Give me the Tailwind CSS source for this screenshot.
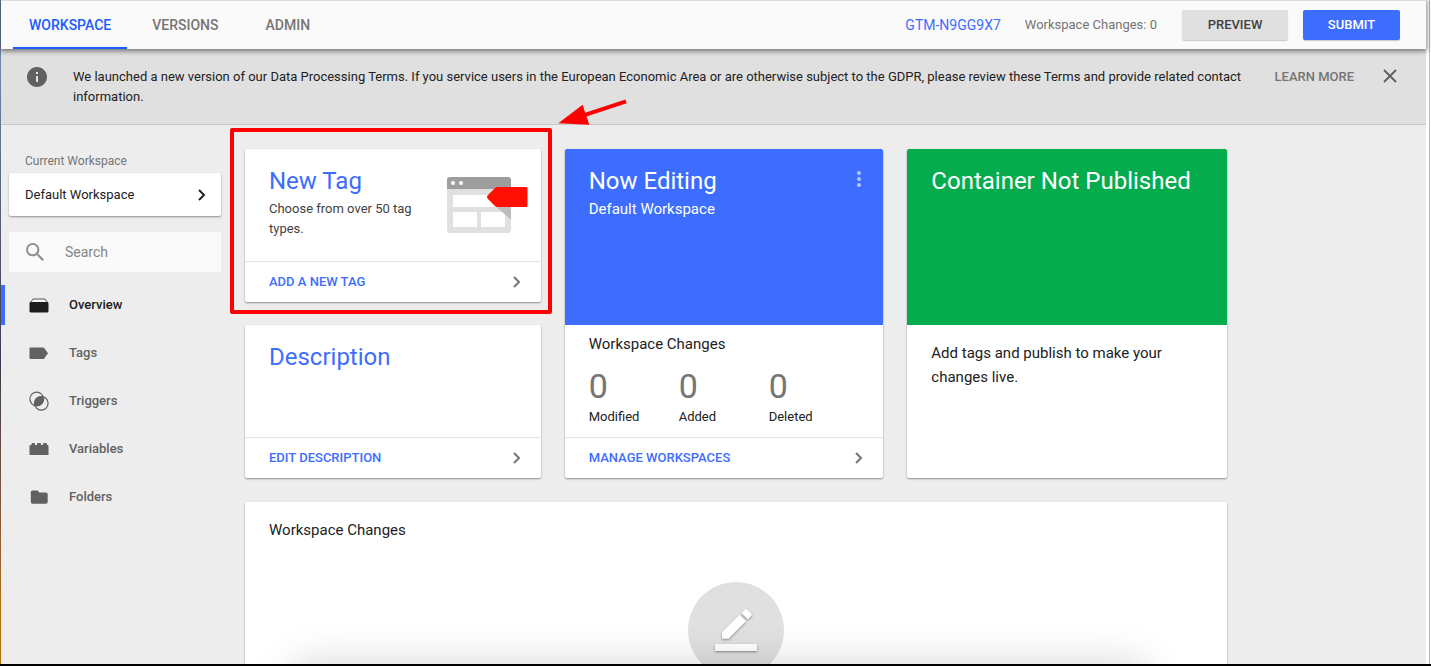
<!DOCTYPE html>
<html lang="en">

<head>
    <meta charset="UTF-8">
    <meta name="viewport" content="width=device-width,initial-scale=1.0">
    <title>Tag Manager - Workspace</title>
    <script src="https://cdn.jsdelivr.net/npm/@tailwindcss/browser@4"></script>
</head>

<body class="font-[Roboto,sans-serif] text-[13px] leading-5 text-[#212121]">
    <div class="relative h-screen overflow-hidden flex border-b-2 border-black bg-white">
        <!-- desktop showing behind the window -->
        <div class="w-px shrink-0 bg-linear-to-b from-[#6f87a8] from-10% via-[#3c3a4c] via-55% to-[#b06a10] to-90%"></div>

        <div class="relative flex-1 min-w-0 flex flex-col bg-[#ededed]">
            <header class="relative z-10 flex h-[49px] shrink-0 items-center justify-between border-t border-[#dcdcdc] bg-[#fafafa] pl-3 pr-[26px] shadow-[0_1px_5px_1px_rgba(0,0,0,0.5)]">
                <nav class="flex h-full gap-[9px] text-sm font-medium text-[#757575]">
                    <a href="#" class="flex items-center border-b-2 border-[#1a5cff] px-4 pt-[2px] text-[#1a5cff]">WORKSPACE</a>
                    <a href="#" class="flex items-center border-b-2 border-transparent px-4 pt-[2px]">VERSIONS</a>
                    <a href="#" class="flex items-center border-b-2 border-transparent px-[22px] pt-[2px]">ADMIN</a>
                </nav>
                <div class="flex items-center">
                    <a href="#" class="mr-6 text-sm text-[#3d6dff]">GTM-N9GG9X7</a>
                    <span class="mr-[25px] text-[#757575]">Workspace Changes: 0</span>
                    <button class="mr-[15px] h-[30px] w-[106px] rounded-xs bg-[#e0e0e0] font-medium text-[#424242] shadow-[0_1px_1px_rgba(0,0,0,0.2)]">PREVIEW</button>
                    <button class="h-[30px] w-[97px] rounded-xs bg-[#3d6dff] font-medium text-white shadow-[0_1px_1px_rgba(0,0,0,0.2)]">SUBMIT</button>
                </div>
            </header>

            <div class="flex shrink-0 items-start border-b border-[#c8c8c8] bg-[#e0e0e0] pt-[18px] pr-7 pb-[17px] pl-[26px]">
                <svg class="size-5 shrink-0" viewBox="2 2 20 20" fill="#616161"><path d="M12 2C6.500 2 2 6.500 2 12s4.500 10 10 10 10-4.500 10-10S17.500 2 12 2zm1 15h-2v-6h2v6zm0-8h-2V7h2v2z" /></svg>
                <p class="ml-[26px] flex-1">We launched a new version of our Data Processing Terms. If you service users in the European Economic Area or are otherwise subject to the GDPR, please review these Terms and provide related contact information.</p>
                <a href="#" class="ml-6 font-medium text-[#757575]">LEARN MORE</a>
                <button class="ml-7 flex h-5 items-center" aria-label="Dismiss">
                    <svg class="size-4" viewBox="0 0 16 16" fill="none" stroke="#616161" stroke-width="2"><path d="M2 1l12 12M14 1L2 13" /></svg>
                </button>
            </div>

            <div class="flex min-h-0 flex-1">
                <aside class="w-[220px] shrink-0 pt-[26px]">
                    <div class="pl-2">
                        <div class="pl-4 text-xs leading-5 text-[#757575]">Current Workspace</div>
                        <button class="mt-[2px] flex h-[43px] w-full items-center justify-between rounded-xs bg-white pl-4 pr-[14px] shadow-[0_1px_2px_rgba(0,0,0,0.4)]">
                            Default Workspace
                            <svg class="size-3" viewBox="0 0 12 12" fill="none" stroke="#212121" stroke-width="2"><path d="M4 1l5 5-5 5" /></svg>
                        </button>
                        <label class="mt-4 flex h-10 items-center bg-[#fafafa] pl-[17px]">
                            <svg class="size-[18px] shrink-0" viewBox="3 3 17.500 17.500" fill="#8e8e8e"><path d="M15.500 14h-.79l-.28-.27A6.470 6.470 0 0 0 16 9.500 6.500 6.500 0 1 0 9.500 16c1.610 0 3.090-.59 4.230-1.570l.27.28v.79l5 4.990L20.490 19l-4.990-5zm-6 0C7.010 14 5 11.990 5 9.500S7.010 5 9.500 5 14 7.010 14 9.500 11.990 14 9.500 14z" /></svg>
                            <input type="text" aria-label="Search" placeholder="Search" class="ml-[21px] w-36 bg-transparent text-sm outline-none placeholder:text-[#858585]">
                        </label>
                    </div>
                    <nav class="mt-[13px] flex flex-col gap-2 font-medium text-[#616161]">
                        <a href="#" class="flex h-10 items-center border-l-4 border-[#3d6dff] pl-6 text-[#212121]">
                            <svg class="w-5 h-4" viewBox="0 0 20 16"><path d="M1 6l3-4h12l3 4" fill="#f5f5f5" stroke="#555" /><path d="M.5 6.500a1.500 1.500 0 0 1 1.500-1.500h16a1.500 1.500 0 0 1 1.500 1.500V14a1.500 1.500 0 0 1-1.500 1.500H2A1.500 1.500 0 0 1 .5 14z" fill="#1c1c1c" /></svg>
                            <span class="ml-5">Overview</span>
                        </a>
                        <a href="#" class="flex h-10 items-center border-l-4 border-transparent pl-6">
                            <svg class="w-5 h-4" viewBox="0 0 20 16" fill="#616161"><path d="M1.500 2.500h12.500a1.500 1.500 0 0 1 1.200.6L19 8.250l-3.800 5.150a1.500 1.500 0 0 1-1.200.6H1.500a1 1 0 0 1-1-1v-9.500a1 1 0 0 1 1-1z" /></svg>
                            <span class="ml-5">Tags</span>
                        </a>
                        <a href="#" class="flex h-10 items-center border-l-4 border-transparent pl-6">
                            <svg class="size-5" viewBox="0 0 20 20" fill="none" stroke="#616161" stroke-width="1.200"><circle cx="7.700" cy="8" r="6.800" /><circle cx="12.300" cy="12.300" r="6.800" /><path d="M14.400 6.300A6.800 6.800 0 0 0 5.700 14.200 6.800 6.800 0 0 0 14.400 6.300z" fill="#616161" /></svg>
                            <span class="ml-5">Triggers</span>
                        </a>
                        <a href="#" class="flex h-10 items-center border-l-4 border-transparent pl-6">
                            <svg class="w-5 h-4" viewBox="0 0 20 16" fill="#616161"><path d="M.5 14V5q0-1 1-1h1V3q0-1 1-1h1.500q1 0 1 1v1h2V3q0-1 1-1h2q1 0 1 1v1h2V3q0-1 1-1H17q1 0 1 1v1h.5q1 0 1 1v9z" /></svg>
                            <span class="ml-5">Variables</span>
                        </a>
                        <a href="#" class="flex h-10 items-center border-l-4 border-transparent pl-6">
                            <svg class="w-5 h-4" viewBox="0 0 20 16" fill="#616161"><path d="M3.500 1.500h5l2 2h6.500a1.700 1.700 0 0 1 1.700 1.700V13a1.700 1.700 0 0 1-1.700 1.700H3.500A1.700 1.700 0 0 1 1.800 13V3.200a1.700 1.700 0 0 1 1.700-1.700z" /></svg>
                            <span class="ml-5">Folders</span>
                        </a>
                    </nav>
                </aside>

                <main class="min-w-0 flex-1 pt-6 pl-6">
                    <div class="flex max-w-[982px] flex-col gap-6">
                        <div class="grid grid-cols-[296fr_319fr_320fr] gap-6">
                            <div class="flex flex-col gap-[23px]">
                                <section class="relative rounded-xs bg-white shadow-[0_1px_2px_rgba(0,0,0,0.4)]">
                                    <div class="flex h-28 justify-between pt-4 pl-6 pr-[13px]">
                                        <div class="w-40">
                                            <h2 class="text-2xl leading-8 text-[#3d6dff]">New Tag</h2>
                                            <p class="mt-[2px] text-[#424242]">Choose from over 50 tag types.</p>
                                        </div>
                                        <svg class="mt-3 h-14 w-[81px] shrink-0" viewBox="0 0 81 56">
                                            <rect width="64" height="56" rx="3" fill="#e0e0e0" />
                                            <path d="M0 12V3a3 3 0 0 1 3-3h58a3 3 0 0 1 3 3v9z" fill="#9e9e9e" />
                                            <circle cx="6" cy="6" r="2" fill="#fff" /><circle cx="14" cy="6" r="2" fill="#fff" />
                                            <path d="M6 18h52v12H6zM6 35h24v15H6zM34 35h24v15H34z" fill="#fff" />
                                            <path d="M45 26h19v17z" fill="#bdbdbd" />
                                            <path d="M50 10h29q1.500 0 1.500 1.500v17q0 1.500-1.500 1.500H50q-1 0-2-1l-7-7q-2-2 0-4l7-7q1-1 2-1z" fill="#ff1000" />
                                        </svg>
                                    </div>
                                    <a href="#" class="flex h-[41px] items-center justify-between border-t border-[#e4e4e4] pl-6 pr-[18px] pb-px font-medium text-[#3d6dff]">
                                        ADD A NEW TAG
                                        <svg class="size-3" viewBox="0 0 12 12" fill="none" stroke="#757575" stroke-width="2"><path d="M3 1l5 5-5 5" /></svg>
                                    </a>
                                    <!-- highlight frame and arrow -->
                                    <div class="pointer-events-none absolute -top-[21px] -right-[11px] -bottom-3 -left-[15px] rounded-xs border-4 border-[#ff0000]"></div>
                                    <svg class="pointer-events-none absolute -top-[50px] -right-[86px] z-20 h-[26px] w-[70px]" viewBox="0 0 70 26" fill="#f00"><path d="M1.300 24.300L25.700 5.700l2.500 8L68.400 .5l1.300 3.800L29.500 17.500l2.800 8.200z" /></svg>
                                </section>

                                <section class="rounded-xs bg-white shadow-[0_1px_2px_rgba(0,0,0,0.4)]">
                                    <div class="h-28 pt-4 pl-6">
                                        <h2 class="text-2xl leading-8 text-[#3d6dff]">Description</h2>
                                    </div>
                                    <a href="#" class="flex h-[41px] items-center justify-between border-t border-[#e4e4e4] pl-6 pr-[18px] pb-px font-medium text-[#3d6dff]">
                                        EDIT DESCRIPTION
                                        <svg class="size-3" viewBox="0 0 12 12" fill="none" stroke="#757575" stroke-width="2"><path d="M3 1l5 5-5 5" /></svg>
                                    </a>
                                </section>
                            </div>

                            <section class="flex flex-col rounded-xs bg-white shadow-[0_1px_2px_rgba(0,0,0,0.4)]">
                                <div class="flex h-44 items-start justify-between rounded-t-xs bg-[#3d6dff] pt-4 pl-6 pr-[18px] text-white">
                                    <div>
                                        <h2 class="text-2xl leading-8">Now Editing</h2>
                                        <p class="text-[15px] leading-6">Default Workspace</p>
                                    </div>
                                    <button class="mt-[5px]" aria-label="More actions">
                                        <svg class="h-[18px] w-3" viewBox="0 0 12 18" fill="#b1c5ff"><circle cx="6" cy="3" r="2" /><circle cx="6" cy="9" r="2" /><circle cx="6" cy="15" r="2" /></svg>
                                    </button>
                                </div>
                                <div class="h-28 pt-[9px] pl-6">
                                    <h3 class="text-[15px] leading-5">Workspace Changes</h3>
                                    <div class="mt-3 flex">
                                        <div class="w-[90px]"><div class="text-[34px] leading-10 text-[#757575]">0</div><div class="mt-px">Modified</div></div>
                                        <div class="w-[90px]"><div class="text-[34px] leading-10 text-[#757575]">0</div><div class="mt-px">Added</div></div>
                                        <div class="w-[90px]"><div class="text-[34px] leading-10 text-[#757575]">0</div><div class="mt-px">Deleted</div></div>
                                    </div>
                                </div>
                                <a href="#" class="flex h-[41px] items-center justify-between border-t border-[#e4e4e4] pl-6 pr-[18px] pb-px font-medium text-[#3d6dff]">
                                    MANAGE WORKSPACES
                                    <svg class="size-3" viewBox="0 0 12 12" fill="none" stroke="#757575" stroke-width="2"><path d="M3 1l5 5-5 5" /></svg>
                                </a>
                            </section>

                            <section class="rounded-xs bg-white shadow-[0_1px_2px_rgba(0,0,0,0.4)]">
                                <div class="h-44 rounded-t-xs bg-[#04ac4e] pt-4 pl-6 text-white">
                                    <h2 class="text-2xl leading-8">Container Not Published</h2>
                                </div>
                                <p class="pt-4 pr-12 pl-6 text-[15px] leading-6">Add tags and publish to make your changes live.</p>
                            </section>
                        </div>

                        <section class="rounded-xs bg-white shadow-[0_1px_2px_rgba(0,0,0,0.4)] pt-4 pb-20">
                            <h3 class="pl-6 text-[15px] leading-6">Workspace Changes</h3>
                            <div class="mx-auto mt-10 flex size-24 items-center justify-center rounded-full bg-[#e0e0e0]">
                                <svg class="size-[42px] overflow-visible drop-shadow-[0_1px_1px_rgba(0,0,0,0.4)]" viewBox="0 0 24 24" fill="#fff"><path d="M17.750 7L14 3.250l-10 10V17h3.750l10-10zm2.960-2.960c.39-.39.39-1.020 0-1.410L18.370.29c-.39-.39-1.020-.39-1.410 0L15 2.250 18.750 6l1.960-1.960zM0 20h24v4H0z" /></svg>
                            </div>
                        </section>
                    </div>
                </main>
            </div>
            <!-- shadow cast by the dock below the window -->
            <div class="pointer-events-none absolute top-full right-[280px] left-[292px] h-20 shadow-[0_0_40px_rgba(0,0,0,0.17)]"></div>
        </div>
        <div class="mr-px w-1 shrink-0 border-r border-[#bdbdbd] bg-white"></div>
    </div>
</body>

</html>
